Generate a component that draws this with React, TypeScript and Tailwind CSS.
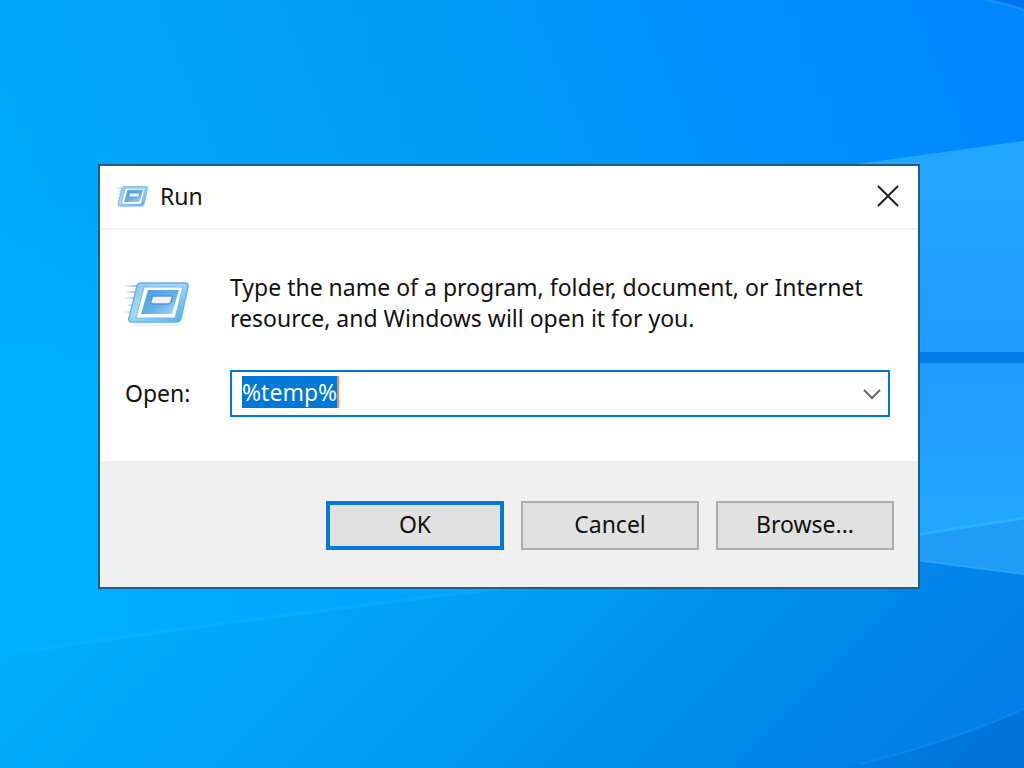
import { useId } from "react";

const buttonBase =
  "h-[49px] w-[178px] min-w-0 bg-[#e1e1e1] pb-0.5 text-[#111] hover:bg-[#e5f1fb]";

function Wallpaper() {
  return (
    <svg
      className="absolute inset-0 h-full w-full"
      viewBox="0 0 1024 768"
      preserveAspectRatio="none"
      aria-hidden="true"
    >
      <defs>
        <linearGradient id="sky" x1="0" y1="0.3" x2="1" y2="0">
          <stop offset="0" stopColor="#00aafb" />
          <stop offset="0.45" stopColor="#009bf7" />
          <stop offset="0.75" stopColor="#008ffd" />
          <stop offset="1" stopColor="#0086ff" />
        </linearGradient>
        <linearGradient id="glow" x1="0" y1="0" x2="1" y2="0">
          <stop offset="0" stopColor="#00b0ff" />
          <stop offset="1" stopColor="#00a2ff" />
        </linearGradient>
        <linearGradient id="glowFade" x1="0" y1="0" x2="0" y2="1">
          <stop offset="0" stopColor="#00b0ff" stopOpacity="0" />
          <stop offset="1" stopColor="#00b0ff" />
        </linearGradient>
        <linearGradient id="floor" x1="0" y1="0.2" x2="1" y2="0.4">
          <stop offset="0" stopColor="#00b0fc" />
          <stop offset="0.5" stopColor="#009df3" />
          <stop offset="0.8" stopColor="#0089eb" />
          <stop offset="1" stopColor="#0080e8" />
        </linearGradient>
        <linearGradient id="corner" x1="0" y1="0" x2="1" y2="0.3">
          <stop offset="0" stopColor="#0076de" stopOpacity="0" />
          <stop offset="1" stopColor="#0072da" />
        </linearGradient>
        <linearGradient id="pane" x1="0" y1="0" x2="0" y2="1">
          <stop offset="0" stopColor="#22a8ff" />
          <stop offset="1" stopColor="#1f9cff" />
        </linearGradient>
        <linearGradient id="paneLow" x1="0" y1="0" x2="0" y2="1">
          <stop offset="0" stopColor="#1f9cff" />
          <stop offset="1" stopColor="#22a8ff" />
        </linearGradient>
      </defs>
      <rect width="1024" height="768" fill="url(#sky)" />
      <rect y="200" width="160" height="240" fill="url(#glowFade)" />
      <path d="M0 440H520V590L0 656Z" fill="url(#glow)" />
      <path d="M0 656L520 584L920 560L1024 574V768H0Z" fill="url(#floor)" />
      <path d="M0 654L250 620L500 588" fill="none" stroke="#0cb2ff" strokeWidth="4" opacity="0.5" />
      <path d="M840 768Q950 745 1024 709V768Z" fill="url(#corner)" />
      <path d="M860 764Q950 742 1024 709" fill="none" stroke="#128cee" strokeWidth="2" opacity="0.6" />
      <path d="M850 165L1024 141V352H850Z" fill="url(#pane)" />
      <path d="M850 363H1024V518L850 542Z" fill="url(#paneLow)" />
      <path d="M850 352H1024V363H850Z" fill="#007de8" />
      <path d="M900 537L1024 518V574L900 558Z" fill="#1f9cf6" />
      <path d="M900 537L1024 518" fill="none" stroke="#28b4ff" strokeWidth="3" />
      <path d="M900 558L1024 574" fill="none" stroke="#28a4fa" strokeWidth="2" />
      <path d="M985 0Q1005 3 1024 10V0Z" fill="#0074ee" />
      <path d="M985 0Q1005 3 1024 10" fill="none" stroke="#1a92ff" strokeWidth="2" />
    </svg>
  );
}

function RunIcon({ className }: { className: string }) {
  const id = useId();
  return (
    <svg className={className} viewBox="0 0 64 48" fill="none" aria-hidden="true">
      <defs>
        <linearGradient id={`${id}frame`} x1="0" y1="0" x2="1" y2="1">
          <stop offset="0" stopColor="#8cc6ee" />
          <stop offset="0.45" stopColor="#a4d8f6" />
          <stop offset="1" stopColor="#4dabea" />
        </linearGradient>
        <linearGradient id={`${id}core`} x1="0" y1="0" x2="1" y2="1">
          <stop offset="0" stopColor="#4a9cde" />
          <stop offset="0.55" stopColor="#62b0ec" />
          <stop offset="1" stopColor="#b4defa" />
        </linearGradient>
        <linearGradient id={`${id}trail`} x1="0" y1="0" x2="1" y2="0">
          <stop offset="0" stopColor="#9fd0f2" stopOpacity="0.2" />
          <stop offset="1" stopColor="#6cb6ea" />
        </linearGradient>
      </defs>
      <path d="M8 44H54L61 12" stroke="#000" strokeOpacity="0.05" strokeWidth="4" strokeLinejoin="round" />
      <path
        d="M0 5H14V7H0ZM2 11H12V13H2ZM0 17H11V19H0ZM3 24H9V26H3ZM0 31H8V33H0Z"
        fill={`url(#${id}trail)`}
      />
      <path
        d="M16 3H60Q64 3 63 7L56 38Q55 42 51 42H7Q3 42 4 38L12 6Q13 3 16 3Z"
        fill={`url(#${id}frame)`}
        stroke="#6ab2e6"
        strokeWidth="1.5"
      />
      <path d="M19 7H58L50 38H11Z" fill="#fff" stroke="#78bbe9" strokeWidth="1" />
      <path d="M23 10H54L47 34H16Z" fill={`url(#${id}core)`} />
      <path d="M29 16H46Q48 16 47 18L46 22Q45 24 43 24H28Q25 24 26 21L27 18Q27 16 29 16Z" fill="#f2f2fd" stroke="#5c92d6" strokeWidth="1.5" />
    </svg>
  );
}

export default function App() {
  return (
    <main className="relative flex min-h-screen items-center justify-center overflow-hidden bg-[#009cfa] pr-1.5 pb-4 font-['Noto_Sans','Open_Sans',sans-serif] text-[23px] leading-[31px] text-[#111]">
      <Wallpaper />

      <section
        role="dialog"
        aria-labelledby="run-title"
        className="relative w-full max-w-[822px] border-2 border-[#1c5f88] bg-white"
      >
        <header className="flex h-16 items-center border-b-2 border-[#f3f3f3] pr-3.5 pl-4">
          <RunIcon className="h-6 w-8" />
          <h1 id="run-title" className="ml-3">Run</h1>
          <button type="button" aria-label="Close" className="ml-auto flex size-8 items-center justify-center">
            <svg className="size-6" viewBox="0 0 24 24" fill="none" stroke="#222" strokeWidth="2" aria-hidden="true">
              <path d="M2 1L22 21M22 1L2 21" />
            </svg>
          </button>
        </header>

        <form onSubmit={(e) => e.preventDefault()}>
          <div className="pt-[42px] pr-7 pb-11 pl-[25px]">
            <div className="flex">
              <div className="w-[105px] shrink-0 pt-2">
                <RunIcon className="h-12 w-16" />
              </div>
              <p>
                Type the name of a program, folder, document, or Internet
                <br />
                resource, and Windows will open it for you.
              </p>
            </div>

            <div className="mt-9 flex items-center">
              <label htmlFor="open" className="w-[105px] shrink-0">Open:</label>
              <div className="flex h-[47px] min-w-0 flex-1 items-start border-2 border-[#0078d7] pt-1 pr-1 pl-2.5">
                <input
                  id="open"
                  type="text"
                  defaultValue="%temp%"
                  className="field-sizing-content h-8 border-r-2 border-[#f58a3c] bg-[#0078d7] text-white outline-none"
                />
                <button type="button" aria-label="Show recent commands" className="ml-auto flex h-9 w-6 items-center justify-center">
                  <svg className="h-3 w-5" viewBox="0 0 20 12" fill="none" stroke="#666" strokeWidth="2" aria-hidden="true">
                    <path d="M2 2L10 10L18 2" />
                  </svg>
                </button>
              </div>
            </div>
          </div>

          <footer className="flex justify-end gap-[17px] bg-[#f0f0f0] pt-10 pr-6 pb-[37px]">
            <button type="submit" className={`${buttonBase} border-4 border-[#0078d7]`}>OK</button>
            <button type="button" className={`${buttonBase} border-2 border-[#adadad]`}>Cancel</button>
            <button type="button" className={`${buttonBase} border-2 border-[#adadad]`}>Browse...</button>
          </footer>
        </form>
      </section>
    </main>
  );
}
